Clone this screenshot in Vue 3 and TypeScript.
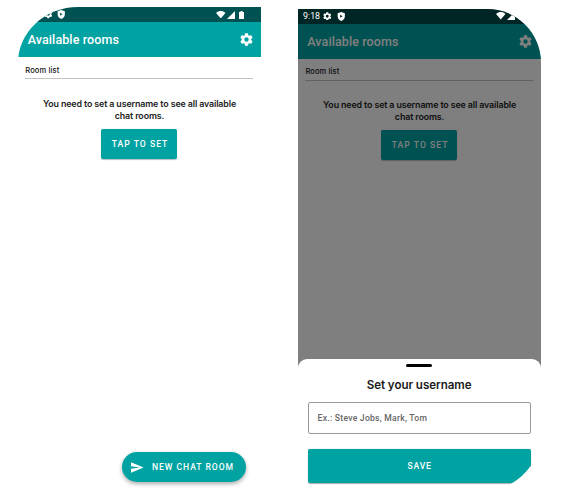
<script setup lang="ts">
interface Screen {
  id: string
  dialog: boolean
}

const screens: Screen[] = [
  { id: 'rooms', dialog: false },
  { id: 'username', dialog: true },
]

const gearPath =
  'M19.14 12.94c.04-.3.06-.61.06-.94s-.02-.64-.07-.94l2.03-1.58c.18-.14.23-.41.12-.61l-1.92-3.32c-.12-.22-.37-.29-.59-.22l-2.39.96c-.5-.38-1.03-.7-1.62-.94l-.36-2.54c-.04-.24-.24-.41-.48-.41h-3.84c-.24 0-.43.17-.47.41l-.36 2.54c-.59.24-1.13.57-1.62.94l-2.39-.96c-.22-.08-.47 0-.59.22L2.74 8.87c-.12.21-.08.47.12.61l2.03 1.58c-.05.3-.09.63-.09.94s.02.64.07.94l-2.03 1.58c-.18.14-.23.41-.12.61l1.92 3.32c.12.22.37.29.59.22l2.39-.96c.5.38 1.03.7 1.62.94l.36 2.54c.05.24.24.41.48.41h3.84c.24 0 .44-.17.47-.41l.36-2.54c.59-.24 1.13-.56 1.62-.94l2.39.96c.22.08.47 0 .59-.22l1.92-3.32c.12-.22.07-.47-.12-.61l-2.01-1.58zM12 15.4a3.4 3.4 0 1 1 0-6.8 3.4 3.4 0 0 1 0 6.8z'
</script>

<template>
  <main class="board">
    <section v-for="s in screens" :key="s.id" class="phone" :class="s.id">
      <header class="status">
        <span class="clock">9:18</span>
        <svg class="s-gear" viewBox="2 2 20 20"><path :d="gearPath" /></svg>
        <svg class="s-shield" viewBox="0 0 18 20">
          <path fill-rule="evenodd" d="M9 0 1 3v7c0 5 3.400 8.700 8 10 4.600-1.300 8-5 8-10V3zM6.500 6v7l5.500-3.500z" />
        </svg>
        <svg class="s-wifi" viewBox="0 0 20 16"><path d="M10 16 0 4C6-1.300 14-1.300 20 4z" /></svg>
        <svg class="s-signal" viewBox="0 0 16 16"><path d="M16 0v16H0z" /></svg>
        <svg class="s-battery" viewBox="0 0 10 16"><path d="M3 0h4v2h3v14H0V2h3z" /></svg>
      </header>
      <div class="appbar">
        <h1>Available rooms</h1>
        <svg class="settings" viewBox="2 2 20 20"><path :d="gearPath" /></svg>
      </div>
      <div class="content">
        <h2>Room list</h2>
        <p class="notice">You need to set a username to see all available<br />chat rooms.</p>
        <button class="set">TAP TO SET</button>
      </div>
      <button v-if="!s.dialog" class="fab">
        <svg viewBox="2 3 21 18"><path d="M2 21 23 12 2 3v7l15 2-15 2z" /></svg>
        <span>NEW CHAT ROOM</span>
      </button>
      <div v-if="s.dialog" class="scrim">
        <div class="sheet">
          <i class="handle"></i>
          <h3>Set your username</h3>
          <div class="field"><span>Ex.: Steve Jobs, Mark, Tom</span></div>
          <button class="save">SAVE</button>
        </div>
      </div>
    </section>
  </main>
</template>

<style>
body {
  background: #fff;
}
</style>

<style scoped>
* {
  box-sizing: border-box;
}
.board {
  width: 563px;
  height: 500px;
  padding: 7px 0 0 18px;
  display: flex;
  align-items: flex-start;
  gap: 36.600px;
  overflow: hidden;
  background: #fff;
  font-family: Roboto, sans-serif;
}
.phone {
  position: relative;
  width: 243px;
  height: 485px;
  flex: none;
  overflow: hidden;
  background: #fff;
}
.rooms {
  border-top-left-radius: 60px 56px;
}
.username {
  margin-top: 1.500px;
  border-top-right-radius: 54px 54px;
}
svg {
  display: block;
  flex: none;
  fill: #fff;
}
.status {
  height: 15px;
  background: #005152;
  display: flex;
  align-items: center;
  padding-left: 5.500px;
  color: #fff;
}
.clock {
  width: 20.200px;
  font-size: 8.800px;
  line-height: 15px;
}
.s-gear { width: 8.500px; height: 8.500px; }
.s-shield { width: 8.500px; height: 9px; margin-left: 5px; }
.s-wifi { width: 9.500px; height: 7.500px; margin-left: 150.800px; }
.s-signal { width: 8px; height: 8px; margin-left: 1px; }
.s-battery { width: 5px; height: 8px; margin-left: 4px; }
.appbar {
  height: 35px;
  padding: 0 8.500px 0 9.700px;
  display: flex;
  align-items: center;
  justify-content: space-between;
  background: #00a2a2;
  color: #fff;
}
h1 {
  margin: 1.500px 0 0;
  font-size: 12.500px;
  font-weight: 500;
  letter-spacing: 0.100px;
  line-height: 16px;
}
.settings { width: 13px; height: 13px; }
.content {
  padding: 7.500px 8px 0 7px;
  display: flex;
  flex-direction: column;
  align-items: center;
}
h2 {
  width: 100%;
  height: 14.500px;
  margin: 0;
  padding-left: 0.300px;
  border-bottom: 1px solid #c2c2c2;
  font: 500 7.500px/12px Inter, sans-serif;
  letter-spacing: 0.130px;
  color: #111;
}
.notice {
  margin: 18.500px 0 0;
  padding-left: 1px;
  white-space: nowrap;
  text-align: center;
  font: 600 8.900px/12.400px Inter, sans-serif;
  letter-spacing: -0.130px;
  color: #1c1c1c;
}
button {
  border: 0;
  padding: 0;
  background: #00a2a2;
  color: #fff;
  font-family: Roboto, sans-serif;
  font-weight: 500;
  font-size: 8.600px;
}
.set {
  width: 76px;
  height: 30px;
  margin-top: 6.200px;
  padding-left: 2px;
  border-radius: 2px;
  letter-spacing: 1.020px;
  box-shadow: 0 0.500px 1px #0004;
}
.fab {
  position: absolute;
  left: 104px;
  top: 445px;
  width: 124px;
  height: 30px;
  border-radius: 15px;
  padding-left: 9px;
  display: flex;
  align-items: center;
  gap: 8.500px;
  letter-spacing: 0.960px;
  white-space: nowrap;
  box-shadow: 0 2px 4px #0005;
}
.fab svg { width: 12.500px; height: 11px; }
.scrim {
  position: absolute;
  inset: 0;
  display: flex;
  align-items: flex-end;
  background: linear-gradient(rgba(0, 0, 0, 0.5) 0 400px, transparent 400px);
}
.sheet {
  width: 100%;
  height: 134.500px;
  padding: 5px 10px 0;
  border-radius: 9px 9px 0 0;
  background: #fff;
  display: flex;
  flex-direction: column;
  align-items: center;
}
.username .status { position: relative; background: #002525; z-index: 1; }
.username .content { padding-left: 7.500px; padding-right: 7.500px; }
.handle {
  width: 26px;
  height: 3px;
  border-radius: 2px;
  background: #000;
}
h3 {
  margin: 10px 0 0;
  font: 600 11.600px/16px Inter, sans-serif;
  letter-spacing: -0.060px;
  color: #1a1a1a;
}
.field {
  width: 100%;
  height: 32px;
  margin-top: 8.500px;
  padding-left: 9px;
  border: 1px solid #999;
  border-radius: 2px;
  display: flex;
  align-items: center;
  font-size: 8.600px;
  font-weight: 500;
  letter-spacing: 0.250px;
  color: #666;
}
.save {
  width: 100%;
  height: 34.500px;
  margin-top: 15px;
  padding-left: 1px;
  border-radius: 2px;
  letter-spacing: 0.800px;
  box-shadow: 0 0.500px 1px #0005;
  clip-path: path('M-2 -2H226V17.500H223Q215 29 203 35.500V37H-2z');
}
</style>
